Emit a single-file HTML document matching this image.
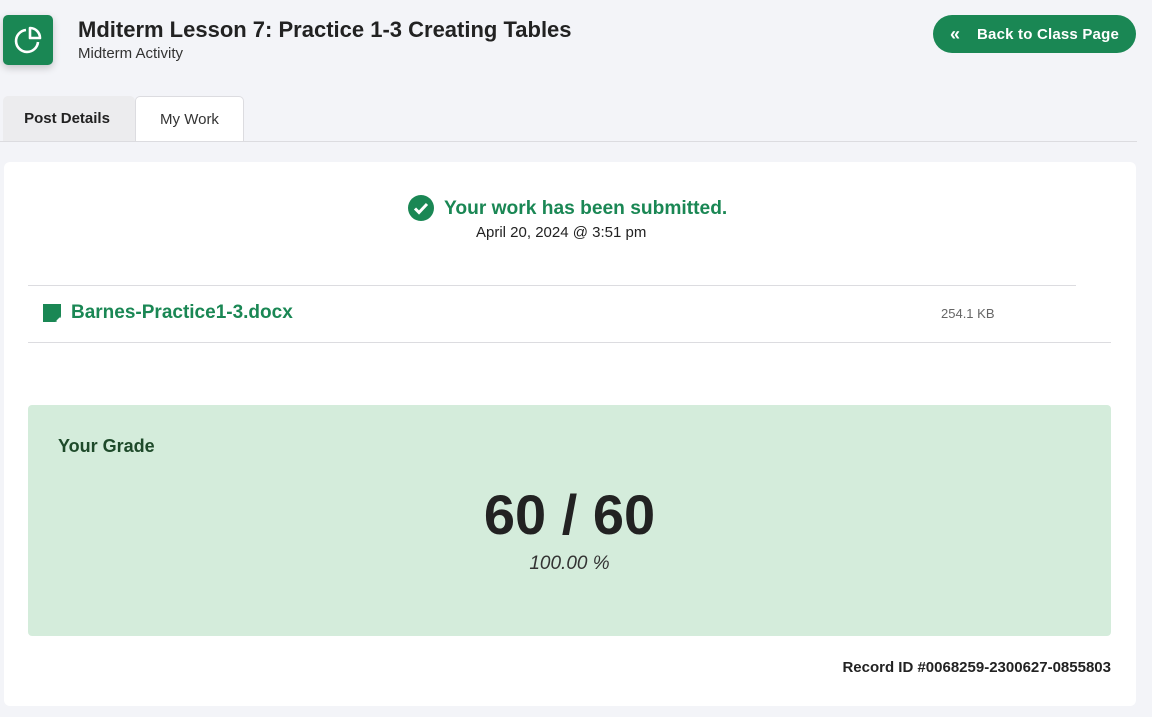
<!DOCTYPE html>
<html><head><style>
*{box-sizing:border-box;margin:0;padding:0}
body{width:1152px;height:717px;background:#f3f4f8;font-family:"Liberation Sans",sans-serif;position:relative;overflow:hidden;color:#222}
.abs{position:absolute}
.logo{left:3px;top:15px;width:50px;height:50px;background:#1a8754;border-radius:5px;box-shadow:0 3px 8px rgba(0,0,0,.2)}
.sub{left:78px;top:45px;font-size:15px;color:#333}
.btn{left:933px;top:15px;width:203px;height:38px;background:#1a8754;border-radius:19px;color:#fff;font-size:15px;font-weight:bold;line-height:40px;padding-left:44px;letter-spacing:0.2px}
.tab1{left:3px;top:96px;width:132px;height:46px;background:#ececee;border-radius:5px 5px 0 0;font-size:15px;font-weight:bold;line-height:46px;text-align:center;color:#222;padding-right:4px}
.tab2{left:135px;top:96px;width:109px;height:46px;background:#fff;border:1px solid #dcdce0;border-bottom:none;border-radius:5px 5px 0 0;font-size:15px;line-height:44px;padding-top:1px;text-align:center;color:#333}
.line{left:0;top:141px;width:1137px;height:1px;background:#dcdce0}
.card{left:4px;top:162px;width:1132px;height:544px;background:#fff;border-radius:6px}
.hr{height:1px;background:#dcdce0}
.grade{left:28px;top:405px;width:1083px;height:231px;background:#d4ecdb;border-radius:4px}
</style></head><body>
<div class="abs logo"><svg width="50" height="50" viewBox="0 0 50 50"><path d="M23 15 A11 11 0 1 0 35 27" fill="none" stroke="#fff" stroke-width="2.6"/><path d="M27 13 A10 10 0 0 1 37 23 L27 23 Z" fill="none" stroke="#fff" stroke-width="2.6" stroke-linejoin="round"/></svg></div>
<div class="abs" style="left:78px;top:17px;font-size:22px;font-weight:bold">Mditerm Lesson 7: Practice 1-3 Creating Tables</div>
<div class="abs sub">Midterm Activity</div>
<div class="abs btn"><span style="position:absolute;left:17px;top:-1px;font-size:18px">«</span>Back to Class Page</div>
<div class="abs tab1">Post Details</div>
<div class="abs tab2">My Work</div>
<div class="abs line"></div>
<div class="abs card"></div>
<div class="abs" style="left:408px;top:195px;width:26px;height:26px;border-radius:50%;background:#1a8754"><svg width="26" height="26"><path d="M7 13.5 L11 17.5 L19 9" fill="none" stroke="#fff" stroke-width="3"/></svg></div>
<div class="abs" style="left:444px;top:198px;font-size:19.2px;font-weight:bold;color:#1a8754">Your work has been submitted.</div>
<div class="abs" style="left:476px;top:224px;font-size:15px;color:#222">April 20, 2024 @ 3:51 pm</div>
<div class="abs hr" style="left:28px;top:285px;width:1048px"></div>
<svg class="abs" style="left:43px;top:304px" width="18" height="18"><path d="M0 0H18V12L12 18H0Z" fill="#1a8754"/><path d="M13 18V13H18" fill="none" stroke="#1a8754" stroke-width="1"/></svg>
<div class="abs" style="left:71px;top:302px;font-size:19px;font-weight:bold;color:#1a8754">Barnes-Practice1-3.docx</div>
<div class="abs" style="left:941px;top:306px;font-size:13px;color:#666">254.1 KB</div>
<div class="abs hr" style="left:28px;top:342px;width:1083px"></div>
<div class="abs grade"></div>
<div class="abs" style="left:58px;top:436px;font-size:18px;font-weight:bold;color:#1e4a2a">Your Grade</div>
<div class="abs" style="left:28px;top:482px;width:1083px;text-align:center;font-size:56px;font-weight:bold;color:#222">60 / 60</div>
<div class="abs" style="left:28px;top:553px;width:1083px;text-align:center;font-size:19px;font-style:italic;color:#333">100.00 %</div>
<div class="abs" style="left:700px;top:659px;width:411px;text-align:right;font-size:15px;font-weight:bold;color:#222">Record ID #0068259-2300627-0855803</div>
</body></html>
